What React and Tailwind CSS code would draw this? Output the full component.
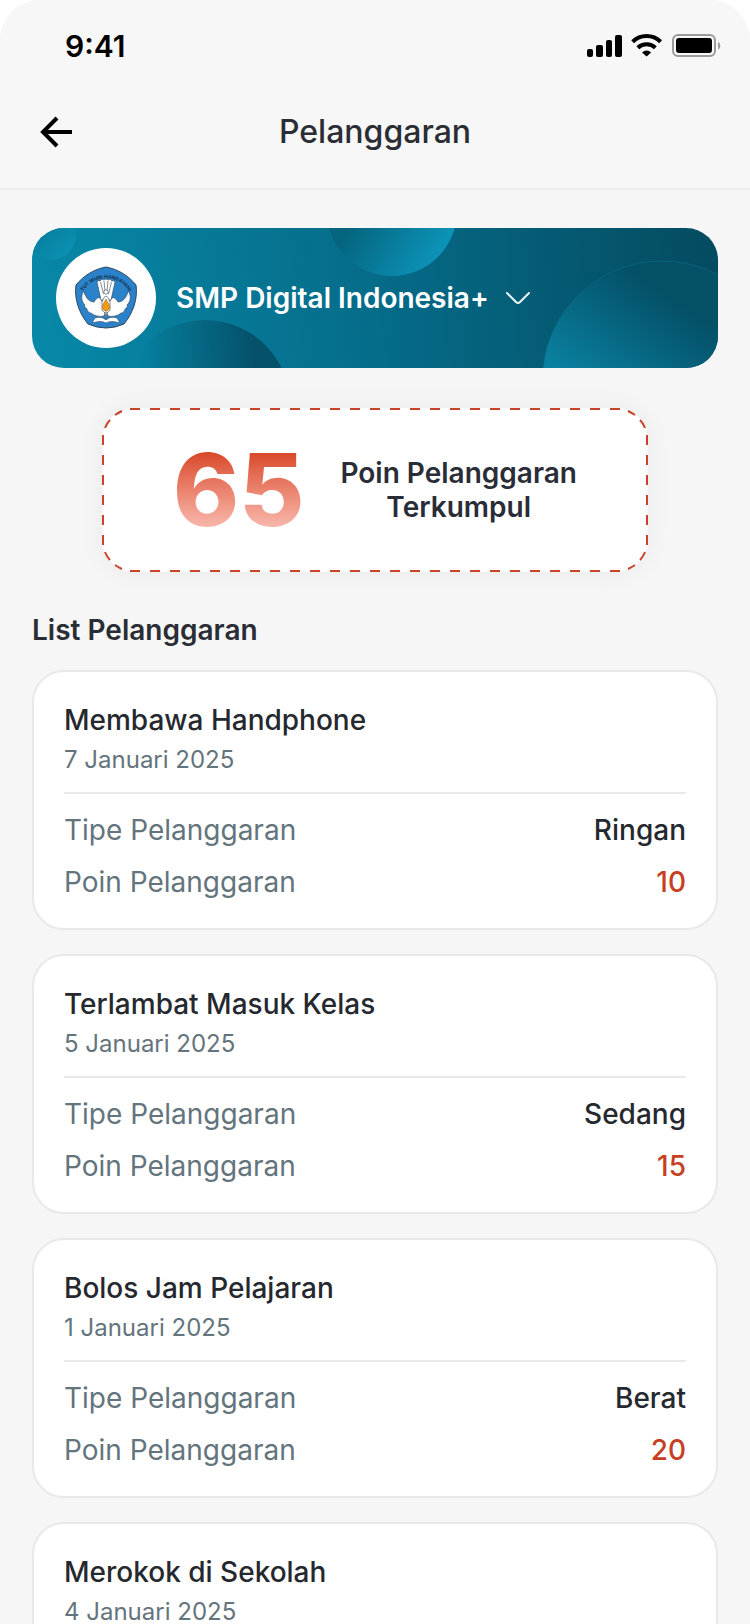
import React from "react";

const violations = [
  { id: 1, title: "Membawa Handphone", date: "7 Januari 2025", type: "Ringan", points: 10 },
  { id: 2, title: "Terlambat Masuk Kelas", date: "5 Januari 2025", type: "Sedang", points: 15 },
  { id: 3, title: "Bolos Jam Pelajaran", date: "1 Januari 2025", type: "Berat", points: 20 },
  { id: 4, title: "Merokok di Sekolah", date: "4 Januari 2025", type: "Berat", points: 20 },
];

const StatusBar = () => (
  <div className="flex h-[92px] items-center justify-between pl-[65px] pr-[29px]">
    <span className="text-[30px] leading-9 font-semibold text-black">9:41</span>
    <svg width="134" height="24" viewBox="0 0 134 24" aria-hidden="true">
      {/* signal */}
      <rect x="0" y="15" width="6" height="8" rx="2" />
      <rect x="9" y="11" width="7" height="12" rx="2" />
      <rect x="19" y="6" width="6" height="17" rx="2" />
      <rect x="28" y="1" width="7" height="22" rx="2" />
      {/* wifi */}
      <g fill="none" stroke="#000" strokeWidth="4">
        <path d="M45.600 7.800a20 20 0 0 1 28 0" />
        <path d="M50.800 13.800a12.600 12.600 0 0 1 17.600 0" />
      </g>
      <path d="M59.600 22.600l-4.500-4.200a6.500 6.500 0 0 1 9 0z" />
      {/* battery */}
      <rect x="86" y="1" width="42" height="21" rx="5" fill="none" stroke="#9b9b9b" strokeWidth="2" />
      <rect x="89" y="4" width="36" height="15" rx="3" />
      <path d="M131 8c3 1.200 3 6.300 0 7.500z" fill="#9b9b9b" />
    </svg>
  </div>
);

const Header = () => (
  <header className="rounded-t-[40px] border-b-2 border-[#eeeeee] bg-[#f7f7f7]">
    <StatusBar />
    <div className="grid h-24 grid-cols-[64px_1fr_64px] items-center px-6 pb-4">
      <button type="button" aria-label="Kembali" className="flex h-16 w-16 items-center justify-center">
        <svg width="34" height="32" viewBox="0 0 34 32" fill="none" stroke="#000" strokeWidth="4" aria-hidden="true">
          <path d="M33 16H4" />
          <path d="M18 2L4 16l14 14" />
        </svg>
      </button>
      <h1 className="text-center text-[32px] leading-10 font-medium text-[#2a2d34]">Pelanggaran</h1>
    </div>
  </header>
);

const BannerArt = () => (
  <svg
    className="absolute inset-0 h-full w-full"
    viewBox="0 0 686 140"
    preserveAspectRatio="xMidYMid slice"
    aria-hidden="true"
  >
    <defs>
      <linearGradient id="bannerBg" gradientUnits="userSpaceOnUse" x1="0" y1="110" x2="686" y2="30">
        <stop offset="0" stopColor="#0888a8" />
        <stop offset="0.500" stopColor="#056c89" />
        <stop offset="0.750" stopColor="#055b74" />
        <stop offset="1" stopColor="#044b61" />
      </linearGradient>
      <linearGradient id="bubbleSmall" x1="0.200" y1="0.200" x2="0.800" y2="0.900">
        <stop offset="0" stopColor="#067a98" />
        <stop offset="1" stopColor="#0b90b2" />
      </linearGradient>
      <linearGradient id="bubbleLeft" gradientUnits="userSpaceOnUse" x1="105" y1="130" x2="225" y2="120">
        <stop offset="0" stopColor="#0682a1" />
        <stop offset="1" stopColor="#05506a" />
      </linearGradient>
      <linearGradient id="bubbleTop" gradientUnits="userSpaceOnUse" x1="315" y1="0" x2="390" y2="48">
        <stop offset="0" stopColor="#05647e" />
        <stop offset="1" stopColor="#0c92b6" />
      </linearGradient>
      <linearGradient id="bubbleRight" gradientUnits="userSpaceOnUse" x1="540" y1="150" x2="610" y2="50">
        <stop offset="0" stopColor="#0a80a0" />
        <stop offset="1" stopColor="#045067" />
      </linearGradient>
    </defs>
    <rect width="686" height="140" fill="url(#bannerBg)" />
    <circle cx="19" cy="7" r="25" fill="url(#bubbleSmall)" />
    <circle cx="173" cy="177" r="85" fill="url(#bubbleLeft)" />
    <circle cx="360" cy="-17" r="65" fill="url(#bubbleTop)" />
    <circle cx="630" cy="153" r="120" fill="url(#bubbleRight)" stroke="#0a647d" strokeWidth="1" />
  </svg>
);

const SchoolEmblem = () => (
  <svg width="62" height="64" viewBox="0 0 124 128" role="img" aria-label="Tut Wuri Handayani">
    <g transform="scale(2)">
      <path
        d="M31 1C42 3 53 9 61 19C63 33 58 47 49 58Q31 66 13 58C4 47-1 33 1 19C9 9 20 3 31 1z"
        fill="#2a82ca"
        stroke="#33475a"
        strokeWidth="1"
      />
      <g fill="#fff" stroke="#33424f" strokeWidth="0.600" strokeLinejoin="round">
        {/* wings */}
        <path d="M27 35C25 30 22 31 19 36C14 36 11 32 8.500 25C6 30 6 35 10 39C9 40 10 42 12 43C12 45 14 47 16 47C19 50 25 51 29 50L31 44z" />
        <path d="M35 35C37 30 40 31 43 36C48 36 51 32 53.500 25C56 30 56 35 52 39C53 40 52 42 50 43C50 45 48 47 46 47C43 50 37 51 33 50L31 44z" />
        {/* tail */}
        <path d="M26 34L22 16Q23 14 25 15Q27 12 29 14Q31 12 33 14Q35 12 37 15Q39 14 40 16L36 34z" />
        <path d="M28.500 28L25.500 16M30 25L29 15M32 25L33 15M33.500 28L36.500 16" fill="none" />
        <circle cx="31" cy="26" r="2.200" />
        <path d="M27 36Q31 24 35 36V44Q31 50 27 44z" />
        {/* book */}
        <path d="M17 57L20 52Q27 50 31 54Q35 50 42 52L45 57Q36 54 31 57Q26 54 17 57z" />
      </g>
      <path d="M31 33C29 37 27 39 27.500 42C28.500 46 33.500 46 34.500 42C35 39 33 37 31 33z" fill="#f59a13" stroke="#8a5a14" strokeWidth="0.500" />
      <path d="M30 46h2l-1 6z" fill="#f4e3c4" stroke="#33424f" strokeWidth="0.400" />
    </g>
    <path id="emblemArc" d="M13 56A54 54 0 0 1 111 56" fill="none" />
    <text className="font-['Liberation_Sans',sans-serif]" fontSize="10" fontWeight="700" fill="#15293b" textAnchor="middle">
      <textPath href="#emblemArc" startOffset="50%">
        TUT WURI HANDAYANI
      </textPath>
    </text>
  </svg>
);

const SchoolBanner = () => (
  <button type="button" className="relative block h-[140px] w-full overflow-hidden rounded-[32px] text-left">
    <BannerArt />
    <span className="relative flex h-full items-center pl-6">
      <span className="flex h-[100px] w-[100px] items-center justify-center rounded-full bg-white">
        <SchoolEmblem />
      </span>
      <span className="ml-5 text-[28px] leading-[34px] font-semibold text-white">SMP Digital Indonesia+</span>
      <svg
        className="ml-4"
        width="26"
        height="14"
        viewBox="0 0 26 14"
        fill="none"
        stroke="#e8f4f7"
        strokeWidth="2"
        strokeLinecap="round"
        aria-hidden="true"
      >
        <path d="M2 2L11 11Q13 13 15 11L24 2" />
      </svg>
    </span>
  </button>
);

const DashedFrame = () => (
  <svg
    className="absolute inset-0 h-full w-full"
    viewBox="0 0 546 164"
    preserveAspectRatio="none"
    fill="none"
    stroke="#c8432a"
    strokeWidth="2"
    aria-hidden="true"
  >
    <path d="M28 1H519M28 163H519" strokeDasharray="10 10" />
    <path d="M1 27V137M545 27V137" strokeDasharray="10 10" />
    <path
      d="M3 20Q5 15 8 12M13 7Q16 5 20 3M543 20Q541 15 538 12M533 7Q530 5 526 3M3 144Q5 149 8 152M13 157Q16 159 20 161M543 144Q541 149 538 152M533 157Q530 159 526 161"
    />
  </svg>
);

const PointsCard = () => (
  <section className="relative mx-auto mt-10 flex h-[164px] w-full max-w-[546px] items-center justify-center gap-9 rounded-[32px] bg-white shadow-[0_0_24px_rgba(0,0,0,0.06)]">
    <DashedFrame />
    <p className="bg-linear-to-b from-[#d94a2b] from-20% to-[#f7b5aa] to-80% bg-clip-text text-[100px] leading-[120px] font-extrabold text-transparent">
      65
    </p>
    <p className="text-center text-[28px] leading-[34px] font-semibold text-[#2a2d38]">
      Poin Pelanggaran
      <br />
      Terkumpul
    </p>
  </section>
);

const ViolationCard = ({ title, date, type, points }) => (
  <li className="rounded-[32px] border-2 border-[#e9e9e9] bg-white px-[30px] pt-7 pb-[26px]">
    <h3 className="text-[28px] leading-10 font-medium text-[#25282e]">{title}</h3>
    <p className="mt-1 text-2xl leading-8 text-[#64747c]">{date}</p>
    <dl className="mt-4 flex flex-col gap-3 border-t-2 border-[#e9e9e9] pt-4">
      <div className="flex justify-between text-[28px] leading-10">
        <dt className="text-[#64747c]">Tipe Pelanggaran</dt>
        <dd className="font-medium text-[#25282e]">{type}</dd>
      </div>
      <div className="flex justify-between text-[28px] leading-10">
        <dt className="text-[#64747c]">Poin Pelanggaran</dt>
        <dd className="font-medium text-[#c63f22]">{points}</dd>
      </div>
    </dl>
  </li>
);

const App = () => {
  return (
    <div className="h-screen overflow-hidden bg-white font-['Inter',sans-serif]">
      <div className="min-h-full rounded-t-[40px] bg-[#f6f6f6]">
        <Header />
        <main className="px-8 pt-[38px]">
          <SchoolBanner />
          <PointsCard />
          <h2 className="mt-10 text-[28px] leading-9 font-semibold text-[#2a2d34]">List Pelanggaran</h2>
          <ul className="mt-[22px] flex flex-col gap-6">
            {violations.map((violation) => (
              <ViolationCard key={violation.id} {...violation} />
            ))}
          </ul>
        </main>
      </div>
    </div>
  );
};

export default App;
